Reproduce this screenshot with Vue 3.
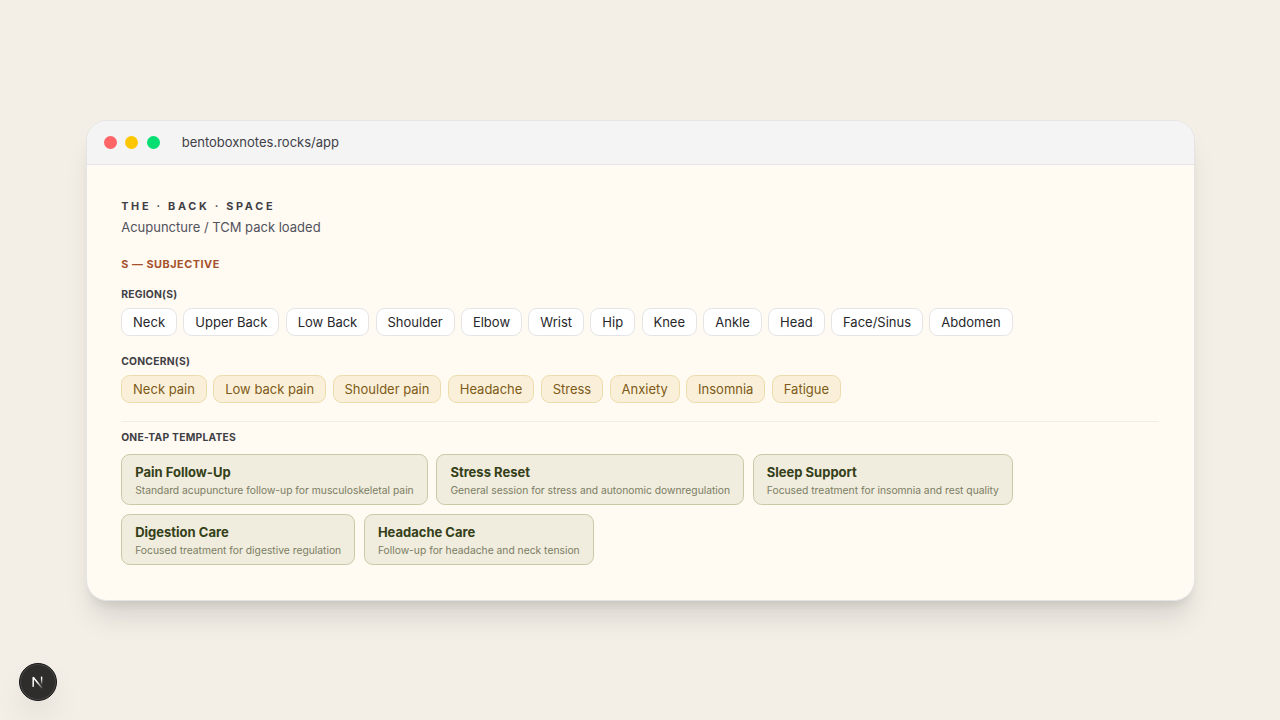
<script setup>
import { ref } from 'vue'

const regions = ref([
  'Neck', 'Upper Back', 'Low Back', 'Shoulder', 'Elbow', 'Wrist',
  'Hip', 'Knee', 'Ankle', 'Head', 'Face/Sinus', 'Abdomen'
])

const concerns = ref([
  'Neck pain', 'Low back pain', 'Shoulder pain', 'Headache',
  'Stress', 'Anxiety', 'Insomnia', 'Fatigue'
])

const templates = ref([
  { name: 'Pain Follow-Up', description: 'Standard acupuncture follow-up for musculoskeletal pain' },
  { name: 'Stress Reset', description: 'General session for stress and autonomic downregulation' },
  { name: 'Sleep Support', description: 'Focused treatment for insomnia and rest quality' },
  { name: 'Digestion Care', description: 'Focused treatment for digestive regulation' },
  { name: 'Headache Care', description: 'Follow-up for headache and neck tension' }
])
</script>

<template>
  <main class="page">
    <section class="window">
      <header class="window-bar">
        <div class="dots">
          <span class="dot red"></span>
          <span class="dot yellow"></span>
          <span class="dot green"></span>
        </div>
        <span class="url">bentoboxnotes.rocks/app</span>
      </header>

      <div class="content">
        <div class="brand">THE · BACK · SPACE</div>
        <div class="pack">Acupuncture / TCM pack loaded</div>

        <h2 class="section-title">S — SUBJECTIVE</h2>

        <h3 class="label">REGION(S)</h3>
        <div class="chips">
          <button v-for="region in regions" :key="region" class="chip">{{ region }}</button>
        </div>

        <h3 class="label label-concerns">CONCERN(S)</h3>
        <div class="chips">
          <button v-for="concern in concerns" :key="concern" class="chip concern">{{ concern }}</button>
        </div>

        <div class="templates-block">
          <h3 class="label">ONE-TAP TEMPLATES</h3>
          <div class="templates">
            <button v-for="item in templates" :key="item.name" class="template">
              <span class="template-name">{{ item.name }}</span>
              <span class="template-description">{{ item.description }}</span>
            </button>
          </div>
        </div>
      </div>
    </section>

    <button class="dev-badge" aria-label="Dev tools">
      <svg width="20" height="20" viewBox="0 0 20 20" fill="none">
        <defs>
          <linearGradient id="stem" x1="0" y1="4" x2="0" y2="13" gradientUnits="userSpaceOnUse">
            <stop offset="0.3" stop-color="#fff" />
            <stop offset="1" stop-color="#fff" stop-opacity="0" />
          </linearGradient>
          <linearGradient id="slash" x1="10" y1="9" x2="15" y2="16" gradientUnits="userSpaceOnUse">
            <stop stop-color="#fff" />
            <stop offset="1" stop-color="#fff" stop-opacity="0.1" />
          </linearGradient>
        </defs>
        <path d="M5.2 15V5.2L14.2 16.2" stroke="url(#slash)" stroke-width="1.5" stroke-linejoin="bevel" />
        <path d="M13.6 4.6V13.2" stroke="url(#stem)" stroke-width="1.4" />
      </svg>
    </button>
  </main>
</template>

<style>
body {
  margin: 0;
  background-color: #f3efe7;
}
</style>

<style scoped>
.page {
  display: flex;
  align-items: center;
  justify-content: center;
  height: 720px;
  background-color: #f3efe7;
  font-family: Inter, "Liberation Sans", sans-serif;
}

.window {
  box-sizing: border-box;
  width: 1109px;
  height: 481px;
  border: 1px solid #e4e4e7;
  border-radius: 21px;
  overflow: hidden;
  background-color: #fffaf2;
  box-shadow: 0 22px 27px -5px rgba(0, 0, 0, 0.1), 0 9px 11px -6px rgba(0, 0, 0, 0.1);
}

.window-bar {
  display: flex;
  align-items: center;
  box-sizing: border-box;
  height: 44.5px;
  padding: 0 17.3px;
  border-bottom: 1px solid #e4e4e7;
  background-color: #f4f4f5;
}

.dots {
  display: flex;
  gap: 8.6px;
}

.dot {
  width: 13px;
  height: 13px;
  border-radius: 50%;
}

.red {
  background-color: #ff6467;
}

.yellow {
  background-color: #fdc700;
}

.green {
  background-color: #05df72;
}

.url {
  margin-left: 21.7px;
  color: #3f3f46;
  font-size: 13px;
}

.content {
  padding: 33.5px 34.7px;
}

.brand {
  color: #3f3f46;
  font-size: 10.83px;
  font-weight: 700;
  line-height: 16px;
  letter-spacing: 2.7px;
}

.pack {
  margin-top: 4.5px;
  color: #52525c;
  font-size: 13px;
  line-height: 17.33px;
}

h2,
h3 {
  margin: 0;
}

.section-title {
  margin-top: 21px;
  color: #a5512b;
  font-size: 10.83px;
  font-weight: 700;
  line-height: 16px;
  letter-spacing: 0.54px;
}

.label {
  color: #3f3f46;
  font-size: 10.3px;
  font-weight: 700;
  line-height: 14px;
  letter-spacing: 0.25px;
}

.section-title + .label {
  margin-top: 14px;
}

.label-concerns {
  margin-top: 18px;
}

.chips {
  display: flex;
  flex-wrap: wrap;
  gap: 6.5px;
  margin-top: 7px;
}

button {
  font-family: inherit;
  cursor: pointer;
}

.chip {
  height: 28px;
  padding: 0 10.9px;
  border: 1px solid #e4e4e7;
  border-radius: 8.7px;
  background-color: #fff;
  color: #27272a;
  font-size: 13px;
  line-height: 17.33px;
}

.concern {
  border-color: #eddcab;
  background-color: #faf0d9;
  color: #7d5a17;
}

.templates-block {
  margin-top: 18px;
  padding-top: 8px;
  border-top: 1px solid #f0ece6;
}

.templates {
  display: flex;
  flex-wrap: wrap;
  gap: 8.67px;
  margin-top: 10px;
}

.template {
  display: flex;
  flex-direction: column;
  box-sizing: border-box;
  height: 51px;
  padding: 8.7px 13px;
  border: 1px solid #c9c9a6;
  border-radius: 8.7px;
  background-color: #f0ecde;
  color: #344018;
  text-align: left;
}

.template-name {
  font-size: 13px;
  font-weight: 700;
  line-height: 17.33px;
}

.template-description {
  margin-top: 2px;
  color: #7b7e63;
  font-size: 10.3px;
  line-height: 14px;
}

/* floats over the page in the bottom left corner */
.dev-badge {
  position: absolute;
  left: 19px;
  bottom: 19px;
  display: flex;
  align-items: center;
  justify-content: center;
  width: 38px;
  height: 38px;
  padding: 0;
  border: 1px solid #171717;
  border-radius: 50%;
  background-color: #2e2d2c;
  box-shadow: inset 0 0 0 1px #4a4948, 0 16px 32px -8px rgba(0, 0, 0, 0.18);
}
</style>
